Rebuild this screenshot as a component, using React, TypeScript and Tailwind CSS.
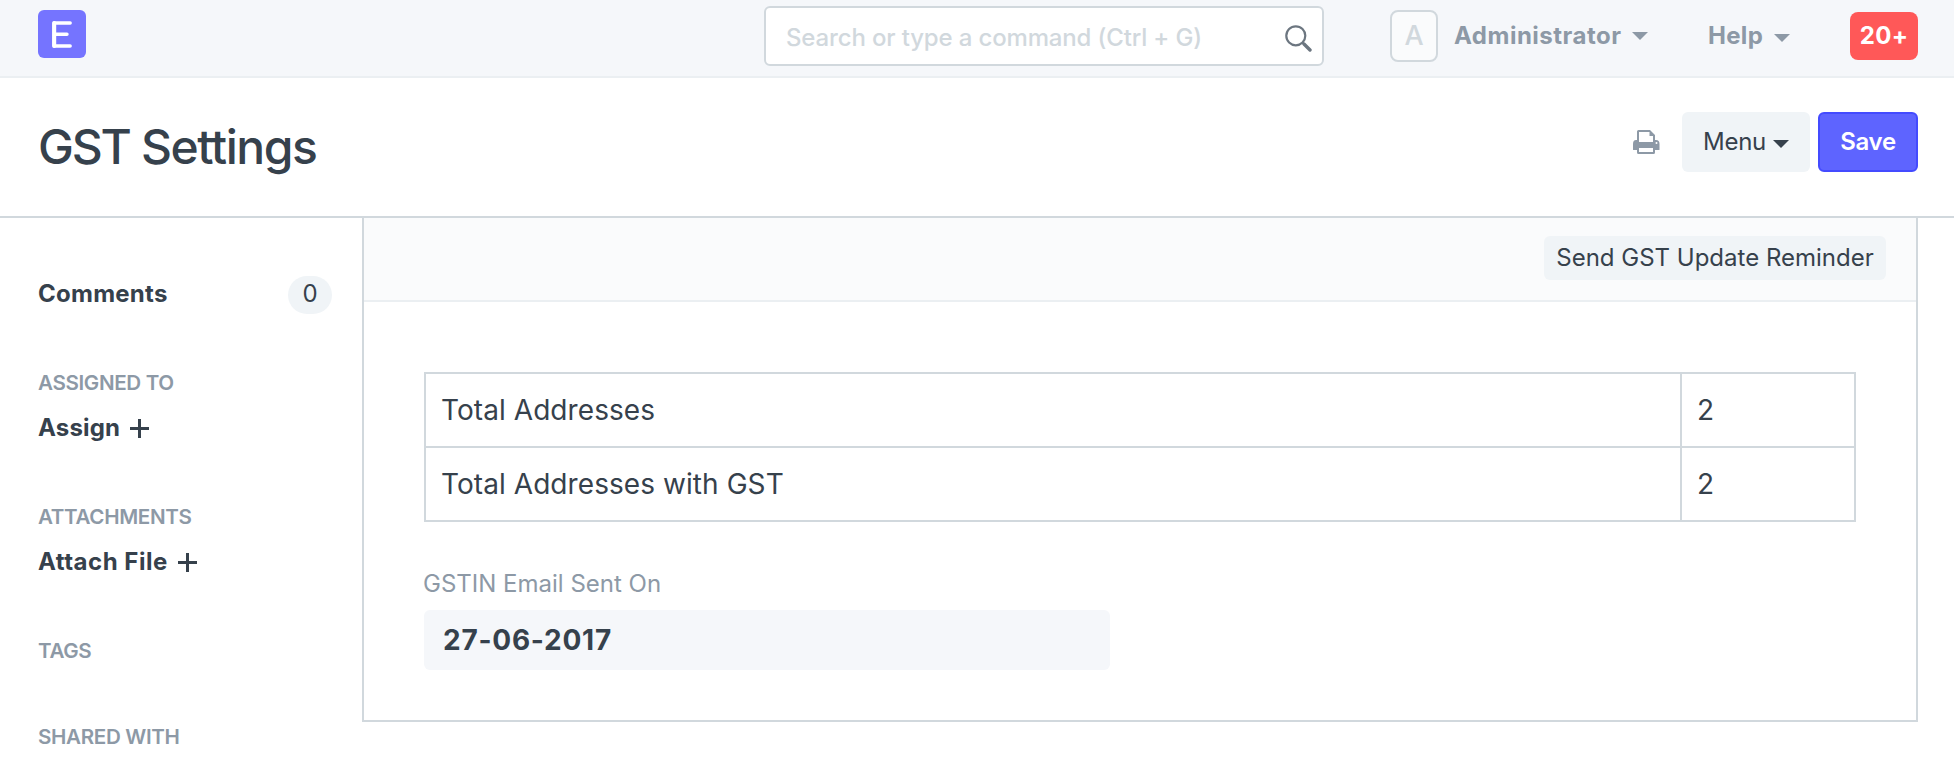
import type { ReactNode } from "react";

function Caret({ className = "" }: { className?: string }) {
  return (
    <svg className={"shrink-0 " + className} width="16" height="8" viewBox="0 0 16 8" fill="currentColor">
      <path d="M0 0h16L8 8z" />
    </svg>
  );
}

function Plus() {
  return (
    <svg className="ml-[10px] mt-[1px] shrink-0" width="19" height="19" viewBox="0 0 19 19" fill="currentColor">
      <path d="M8 0h3v8h8v3h-8v8H8v-8H0V8h8z" />
    </svg>
  );
}

function SearchIcon() {
  return (
    <svg width="27" height="27" viewBox="0 0 27 27" fill="none" stroke="#6c7680">
      <circle cx="10.800" cy="10.800" r="9.500" strokeWidth="2.200" />
      <path d="M17.500 17.500l2.500 2.500" strokeWidth="2.200" />
      <path d="M19 19l6 6" strokeWidth="3.400" strokeLinecap="round" />
    </svg>
  );
}

function PrintIcon() {
  return (
    <svg width="27" height="24" viewBox="0 0 27 24" fill="#8d99a6">
      <path
        fillRule="evenodd"
        d="M4 10V1.500Q4 0 5.500 0H17l5 5v5h1Q26.500 10 26.500 14v5.500q0 .5-.5.500h-4v2.500q0 1.500-1.500 1.500h-15Q4 24 4 22.500V20H.5q-.5 0-.5-.5V14q0-4 3-4zM6 2v10h14V6h-3.500V2zM6 18v4h14v-4zM23.500 12a1 1 0 1 0 0 2a1 1 0 1 0 0-2z"
      />
    </svg>
  );
}

function Heading({ children, className = "" }: { children: ReactNode; className?: string }) {
  return <h6 className={"text-[20.6px] leading-[30px] font-semibold tracking-[-0.35px] text-[#8d99a6] " + className}>{children}</h6>;
}

function Navbar() {
  return (
    <header className="flex h-[78px] items-start border-b-2 border-[#ebeff2] bg-[#f5f7fa] pl-[38px] pr-[36px]">
      <div className="mt-[10px] flex size-12 items-center justify-center rounded-[6px] bg-[#7574ff]">
        <svg width="20" height="27" viewBox="0 0 20 27" fill="none" stroke="#fff" strokeLinecap="round" strokeLinejoin="round">
          <path d="M2 2V25M2 2H18.200M2 13.200H15M2 25H18.200" strokeWidth="3.400" />
          <path d="M2.200 2V25" strokeWidth="4" />
        </svg>
      </div>
      <div className="ml-auto mt-[6px] flex h-[60px] w-[560px] items-center justify-between rounded-[6px] border-2 border-[#d1d8dd] bg-white pl-[20px] pr-[10px] text-[24px] font-medium tracking-[-0.15px] text-[#d1d8dd]">
        <span className="pt-[3px]">Search or type a command (Ctrl + G)</span>
        <span className="pt-[4px]">
          <SearchIcon />
        </span>
      </div>
      <div className="ml-[66px] mt-[10px] flex h-[52px] w-[48px] items-center justify-center rounded-[8px] border-2 border-[#d1d8dd] bg-[#fafbfc] text-[27px] font-medium text-[#d1d8dd]">
        A
      </div>
      <div className="ml-[16px] mt-[19px] flex w-[396px] items-center text-[24px] leading-[34px] font-bold tracking-[0.5px] text-[#8d99a6]">
        <span className="w-[178px]">Administrator</span>
        <Caret className="-mt-px" />
        <span className="ml-[60px] w-[66px] tracking-[0.3px]">Help</span>
        <Caret className="mt-[3px]" />
      </div>
      <div className="mt-[12px] flex h-12 w-[68px] items-center justify-center rounded-[8px] bg-[#ff5858] text-[24px] font-bold tracking-[0.3px] text-white">
        20+
      </div>
    </header>
  );
}

function PageHead() {
  return (
    <div className="flex h-[140px] items-start border-b-2 border-[#d1d8dd] pl-[38px] pr-[36px]">
      <h1 className="mt-[39px] text-[48px] leading-[60px] font-medium tracking-[-1.45px] text-[#36414c]">
        <span className="tracking-[-2.2px]">GST</span> Settings
      </h1>
      <div className="ml-auto mt-[34px] flex h-[60px] items-center text-[24px] text-[#36414c]">
        <PrintIcon />
        <button className="ml-[22px] flex h-[60px] w-32 items-center justify-center rounded-[6px] bg-[#f0f4f7]">
          <span className="tracking-[-0.3px]">Menu</span>
          <Caret className="ml-[7px] mt-[3px]" />
        </button>
        <button className="ml-2 h-[60px] w-[100px] rounded-[6px] border-2 border-[#444bff] bg-[#5e64ff] font-semibold tracking-[-0.3px] text-white">
          Save
        </button>
      </div>
    </div>
  );
}

function Sidebar() {
  return (
    <aside className="flex w-[362px] shrink-0 flex-col pl-[38px] pr-[30px] text-[24px] leading-[34px] font-bold text-[#36414c]">
      <div className="mt-[58px] flex h-[38px] items-start justify-between">
        <span className="pt-px tracking-[0.25px]">Comments</span>
        <span className="flex h-[38px] w-[44px] items-center justify-center rounded-[20px] bg-[#f0f4f7] pb-[2px] font-normal">0</span>
      </div>
      <Heading className="mt-[54px]">ASSIGNED TO</Heading>
      <div className="mt-[13px] flex items-center tracking-[0.15px]">
        <span>Assign</span>
        <Plus />
      </div>
      <Heading className="mt-[57px]">ATTACHMENTS</Heading>
      <div className="mt-[13px] flex items-center tracking-[0.5px]">
        <span>Attach File</span>
        <Plus />
      </div>
      <Heading className="mt-[57px]">TAGS</Heading>
      <Heading className="mt-[56px]">SHARED WITH</Heading>
    </aside>
  );
}

const rows: [string, string][] = [
  ["Total Addresses", "2"],
  ["Total Addresses with GST", "2"],
];

function FormPanel() {
  return (
    <main className="mr-[36px] h-[504px] flex-1 border-x-2 border-b-2 border-[#d1d8dd]">
      <div className="flex h-[84px] items-start justify-end border-b-2 border-[#ebeff2] bg-[#fafbfc] pr-[30px] pt-[18px]">
        <button className="h-[44px] w-[342px] rounded-[6px] bg-[#f0f4f7] text-[24px] whitespace-nowrap text-[#36414c]">
          Send GST Update Reminder
        </button>
      </div>
      <div className="px-[60px] pt-[70px]">
        <table className="w-full table-fixed border-collapse text-[28px] tracking-[0.07px] text-[#36414c]">
          <colgroup>
            <col />
            <col className="w-[174px]" />
          </colgroup>
          <tbody>
            {rows.map(([label, value]) => (
              <tr key={label} className="h-[74px]">
                <td className="border-2 border-[#d1d8dd] px-[15px]">{label}</td>
                <td className="border-2 border-[#d1d8dd] px-[15px]">{value}</td>
              </tr>
            ))}
          </tbody>
        </table>
        <div className="mt-[44px] -ml-px text-[24px] leading-[36px] text-[#8d99a6]">GSTIN Email Sent On</div>
        <div className="mt-[8px] flex h-[60px] w-[686px] items-center rounded-[6px] bg-[#f5f7fa] pl-[19px] text-[28px] font-bold tracking-[0.75px] text-[#36414c]">
          27-06-2017
        </div>
      </div>
    </main>
  );
}

export default function App() {
  return (
    <div className="h-[774px] w-[1954px] overflow-hidden bg-white font-['Inter',sans-serif]">
      <Navbar />
      <PageHead />
      <div className="flex items-start">
        <Sidebar />
        <FormPanel />
      </div>
    </div>
  );
}
